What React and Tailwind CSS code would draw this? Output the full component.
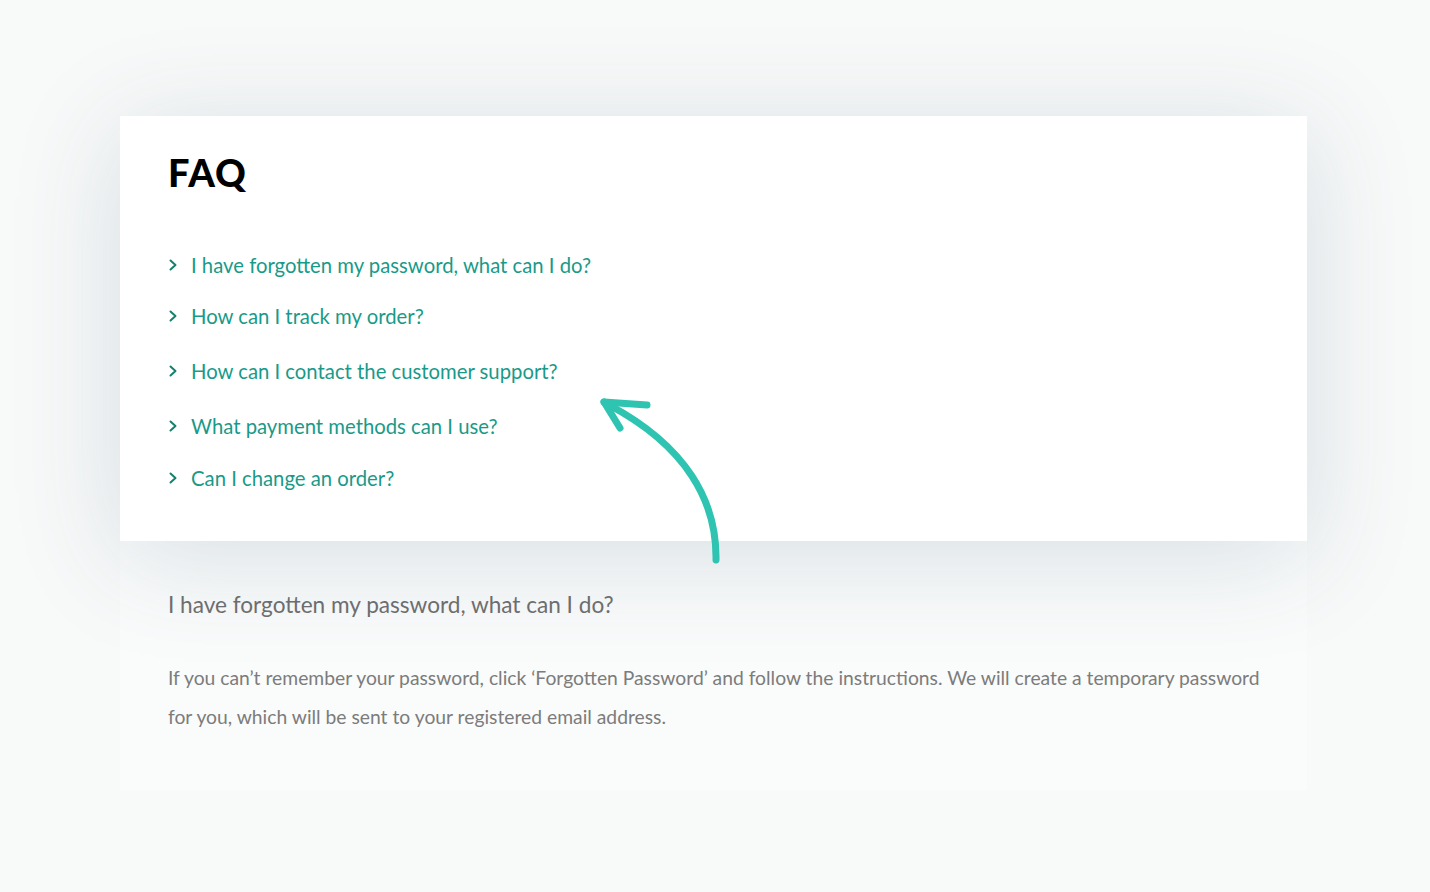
import React from "react";

const questions = [
  { text: "I have forgotten my password, what can I do?", mt: "mt-0" },
  { text: "How can I track my order?", mt: "mt-[21px]" },
  { text: "How can I contact the customer support?", mt: "mt-[25px]" },
  { text: "What payment methods can I use?", mt: "mt-[25px]" },
  { text: "Can I change an order?", mt: "mt-[22px]" },
];

function Chevron() {
  return (
    <svg width="10" height="12" viewBox="0 0 10 12" className="shrink-0">
      <path d="M2.5 1.5 L7.5 6 L2.5 10.5" fill="none" stroke="#14806f" strokeWidth="2" strokeLinecap="round" strokeLinejoin="round" />
    </svg>
  );
}

export default function App() {
  return (
    <div className="min-h-[892px] w-full bg-[#f8f9f9] pt-[116px] font-['Lato',sans-serif]">
      <div className="relative mx-[120px] w-[1187px]">
        {/* Question list card */}
        <div className="relative z-10 h-[425px] bg-white px-12 pt-[32px] shadow-[0_16px_100px_rgba(50,90,110,0.17)]">
          <h1 className="text-[38px] font-black leading-[48px] tracking-[1px] text-black">FAQ</h1>
          <ul className="mt-[54px]">
            {questions.map((q) => (
              <li key={q.text} className={`${q.mt} flex h-[30px] items-center gap-[13px]`}>
                <Chevron />
                <span className="text-[20.3px] leading-[30px] text-[#189a89]">{q.text}</span>
              </li>
            ))}
          </ul>
        </div>

        {/* Answer panel */}
        <div className="h-[249px] bg-[#fafbfb] pl-12 pr-4 pt-[48px]">
          <h2 className="text-[22.6px] leading-[32px] text-[#6f6f6f]">I have forgotten my password, what can I do?</h2>
          <p className="mt-[37px] whitespace-nowrap text-[19.3px] leading-[39px] text-[#7c7c7c]">
            If you can’t remember your password, click ‘Forgotten Password’ and follow the instructions. We will create a temporary password
            <br />
            for you, which will be sent to your registered email address.
          </p>
        </div>

        {/* Hand-drawn arrow pointing at the list */}
        <svg className="pointer-events-none absolute left-0 top-0 z-20" width="1187" height="674" viewBox="0 0 1187 674">
          <g fill="none" stroke="#2fc4b2" strokeWidth="7" strokeLinecap="round" strokeLinejoin="round">
            <path d="M596 444 C597 385 566 330 489 289" />
            <path d="M484 286 L527 289" />
            <path d="M484 286 L500 312" />
          </g>
        </svg>
      </div>
    </div>
  );
}
